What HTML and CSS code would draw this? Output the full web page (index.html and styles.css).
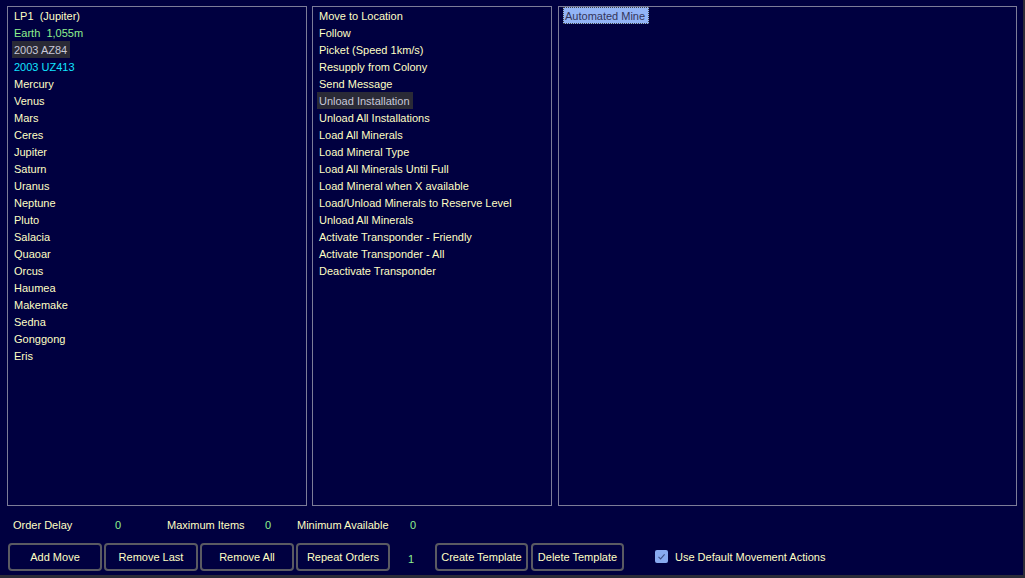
FILE: index.html
```html
<!DOCTYPE html>
<html>
<head>
<meta charset="utf-8">
<link rel="stylesheet" href="styles.css">
</head>
<body>
<div class="window">
  <div class="panels">
    <div class="list list-systems">
      <div class="item">LP1&nbsp; (Jupiter)</div>
      <div class="item green">Earth&nbsp; 1,055m</div>
      <div class="item"><span class="sel">2003 AZ84</span></div>
      <div class="item cyan">2003 UZ413</div>
      <div class="item">Mercury</div>
      <div class="item">Venus</div>
      <div class="item">Mars</div>
      <div class="item">Ceres</div>
      <div class="item">Jupiter</div>
      <div class="item">Saturn</div>
      <div class="item">Uranus</div>
      <div class="item">Neptune</div>
      <div class="item">Pluto</div>
      <div class="item">Salacia</div>
      <div class="item">Quaoar</div>
      <div class="item">Orcus</div>
      <div class="item">Haumea</div>
      <div class="item">Makemake</div>
      <div class="item">Sedna</div>
      <div class="item">Gonggong</div>
      <div class="item">Eris</div>
    </div>
    <div class="list list-orders">
      <div class="item">Move to Location</div>
      <div class="item">Follow</div>
      <div class="item">Picket (Speed 1km/s)</div>
      <div class="item">Resupply from Colony</div>
      <div class="item">Send Message</div>
      <div class="item"><span class="sel">Unload Installation</span></div>
      <div class="item">Unload All Installations</div>
      <div class="item">Load All Minerals</div>
      <div class="item">Load Mineral Type</div>
      <div class="item">Load All Minerals Until Full</div>
      <div class="item">Load Mineral when X available</div>
      <div class="item">Load/Unload Minerals to Reserve Level</div>
      <div class="item">Unload All Minerals</div>
      <div class="item">Activate Transponder - Friendly</div>
      <div class="item">Activate Transponder - All</div>
      <div class="item">Deactivate Transponder</div>
    </div>
    <div class="list list-items">
      <div class="item"><span class="focus">Automated Mine</span></div>
    </div>
  </div>
  <div class="fields">
    <span class="lbl w-od">Order Delay</span>
    <span class="val w-v1">0</span>
    <span class="lbl w-mi">Maximum Items</span>
    <span class="val w-v2">0</span>
    <span class="lbl w-ma">Minimum Available</span>
    <span class="val">0</span>
  </div>
  <div class="buttons">
    <button class="btn">Add Move</button>
    <button class="btn">Remove Last</button>
    <button class="btn">Remove All</button>
    <button class="btn">Repeat Orders</button>
    <span class="val repeat">1</span>
    <button class="btn btn-t">Create Template</button>
    <button class="btn btn-t">Delete Template</button>
    <label class="check">
      <span class="box"><svg width="13" height="13" viewBox="0 0 13 13"><path d="M3.5 6.8 L5.6 8.9 L9.6 4.3" fill="none" stroke="#3d4f86" stroke-width="1.1"/></svg></span>
      <span class="check-text">Use Default Movement Actions</span>
    </label>
  </div>
</div>
</body>
</html>
```
FILE: styles.css
```css
html, body {
  margin: 0;
  padding: 0;
  background: #2c2c38;
}
body {
  width: 1025px;
  height: 578px;
  overflow: hidden;
  font-family: "Liberation Sans", Arial, sans-serif;
  font-size: 11px;
  color: #ffffc4;
}
.window {
  box-sizing: border-box;
  width: 1023px;
  height: 575px;
  background: #000040;
  padding: 6px 0 0 7px;
  display: flex;
  flex-direction: column;
}
.panels {
  display: flex;
  height: 500px;
}
.list {
  box-sizing: border-box;
  height: 500px;
  border: 1px solid #7c7c98;
  padding: 0 0 0 4px;
}
.list-systems { width: 300px; }
.list-orders { width: 240px; margin-left: 5px; }
.list-items { width: 459px; margin-left: 6px; }
.item {
  box-sizing: border-box;
  height: 17px;
  line-height: 16px;
  padding-top: 1px;
  padding-left: 2px;
  white-space: nowrap;
}
.item .sel, .item .focus {
  box-sizing: border-box;
  display: inline-block;
  vertical-align: top;
  margin-top: -1px;
  margin-left: -2px;
  padding: 1px 3px 0 2px;
  height: 17px;
  line-height: 16px;
}
.item .sel {
  background: #2a2a36;
  color: #c8c8d8;
}
.item .focus {
  background: #93b4f6;
  color: #34345a;
  border: 1px dotted #404040;
  line-height: 15px;
  padding: 1px 3px 0 1px;
}
.green { color: #8ef08e; }
.cyan { color: #10e4ff; }
.fields {
  display: flex;
  height: 17px;
  line-height: 17px;
  margin-top: 11px;
  padding-left: 6px;
  white-space: nowrap;
}
.lbl { color: #ffffc4; }
.val { color: #8ef08e; }
.w-od { width: 102px; }
.w-v1 { width: 52px; }
.w-mi { width: 98px; }
.w-v2 { width: 32px; }
.w-ma { width: 113px; }
.buttons {
  display: flex;
  align-items: center;
  margin-top: 9px;
  padding-left: 1px;
  height: 28px;
}
.btn {
  box-sizing: border-box;
  width: 94px;
  height: 28px;
  margin-right: 2px;
  background: #000040;
  border: 2px solid #5a5a62;
  border-radius: 4px;
  color: #ffffc4;
  font-family: "Liberation Sans", Arial, sans-serif;
  font-size: 11px;
  padding: 1px 0 0 0;
  line-height: 23px;
}
.btn-t {
  width: 93px;
  margin-right: 3px;
}
.repeat {
  width: 27px;
  padding-left: 16px;
  line-height: 28px;
  padding-top: 3px;
}
.check {
  display: flex;
  align-items: center;
  margin-left: 28px;
  padding-top: 0;
  margin-bottom: 1px;
}
.box {
  box-sizing: border-box;
  width: 13px;
  height: 13px;
  background: #88aaf0;
  border-radius: 2px;
  display: flex;
}
.check-text {
  margin-left: 7px;
  color: #ffffc4;
}
```
